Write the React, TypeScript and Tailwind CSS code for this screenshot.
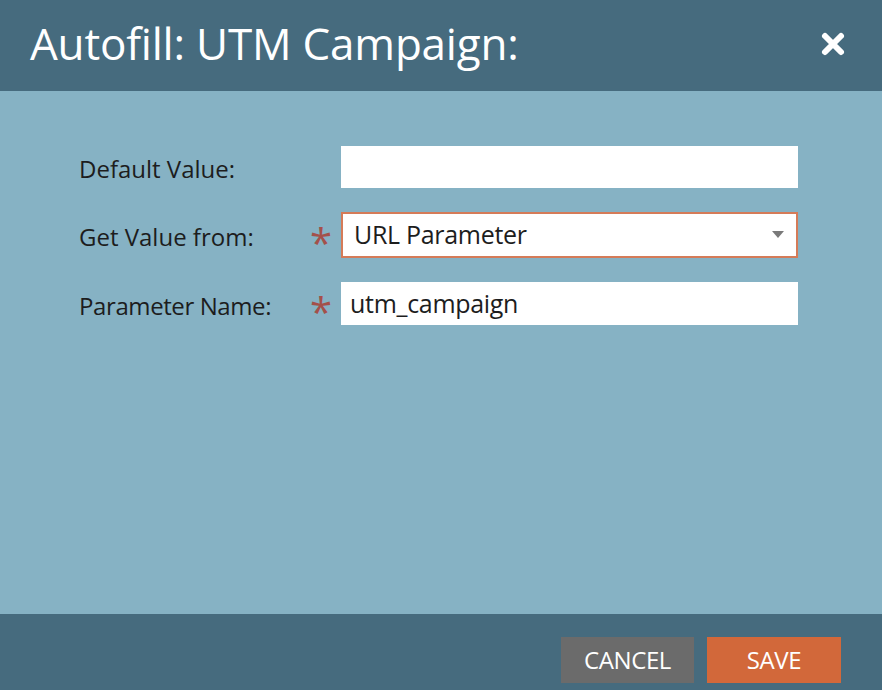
function Asterisk() {
    return <span className="w-[32px] pl-[1px] text-[40px] leading-none text-[#a4504a] pt-[16px] text-left">*</span>;
}

export default function App() {
    return (
        <div className="w-[882px] h-[690px] flex flex-col bg-[#86b2c4] font-['Open_Sans',sans-serif]">
            <header className="h-[91px] bg-[#466b7e] flex items-center justify-between pl-[30px] pr-[36px]">
                <h1 className="text-[44px] text-white tracking-[-0.2px] pb-[6px]">Autofill: UTM Campaign:</h1>
                <svg width="26" height="26" viewBox="0 0 26 26" className="mb-[4px]">
                    <path d="M5 5 L21 21 M21 5 L5 21" stroke="white" strokeWidth="6" strokeLinecap="round" />
                </svg>
            </header>

            <main className="flex-1 pt-[55px] pl-[79px] pr-[84px]">
                <div className="flex flex-col gap-[24px]">
                    <div className="flex items-center h-[42px]">
                        <label className="w-[230px] text-[24px] tracking-[0px] text-[#1d1d1d] pt-[4px]">Default Value:</label>
                        <div className="w-[32px]" />
                        <input className="flex-1 h-[42px] bg-white outline-none px-[12px] text-[24px]" />
                    </div>
                    <div className="flex items-center h-[46px]">
                        <label className="w-[230px] text-[24px] tracking-[0px] text-[#1d1d1d] pt-[4px]">Get Value from:</label>
                        <Asterisk />
                        <div className="flex-1 h-[46px] bg-white border-2 border-[#d57b58] flex items-center justify-between pl-[11px] pr-[12px]">
                            <span className="text-[25px] tracking-[-0.3px] text-[#1d1d1d]">URL Parameter</span>
                            <svg width="12" height="8" viewBox="0 0 12 8"><path d="M0 0 H12 L6 7 Z" fill="#7a7a7a" /></svg>
                        </div>
                    </div>
                    <div className="flex items-center h-[43px]">
                        <label className="w-[230px] text-[24px] tracking-[-0.4px] text-[#1d1d1d] pt-[4px]">Parameter Name:</label>
                        <Asterisk />
                        <div className="flex-1 h-[43px] bg-white flex items-center px-[9px]">
                            <span className="text-[25px] tracking-[-0.3px] text-[#1d1d1d]">utm_campaign</span>
                        </div>
                    </div>
                </div>
            </main>

            <footer className="h-[76px] bg-[#466b7e] flex items-start justify-end gap-[13px] pt-[23px] pr-[41px]">
                <button className="w-[133px] h-[46px] bg-[#6b6b6b] text-white text-[24px] tracking-[-0.4px]">CANCEL</button>
                <button className="w-[134px] h-[46px] bg-[#d2683a] text-white text-[24px] tracking-[-0.4px]">SAVE</button>
            </footer>
        </div>
    );
}
